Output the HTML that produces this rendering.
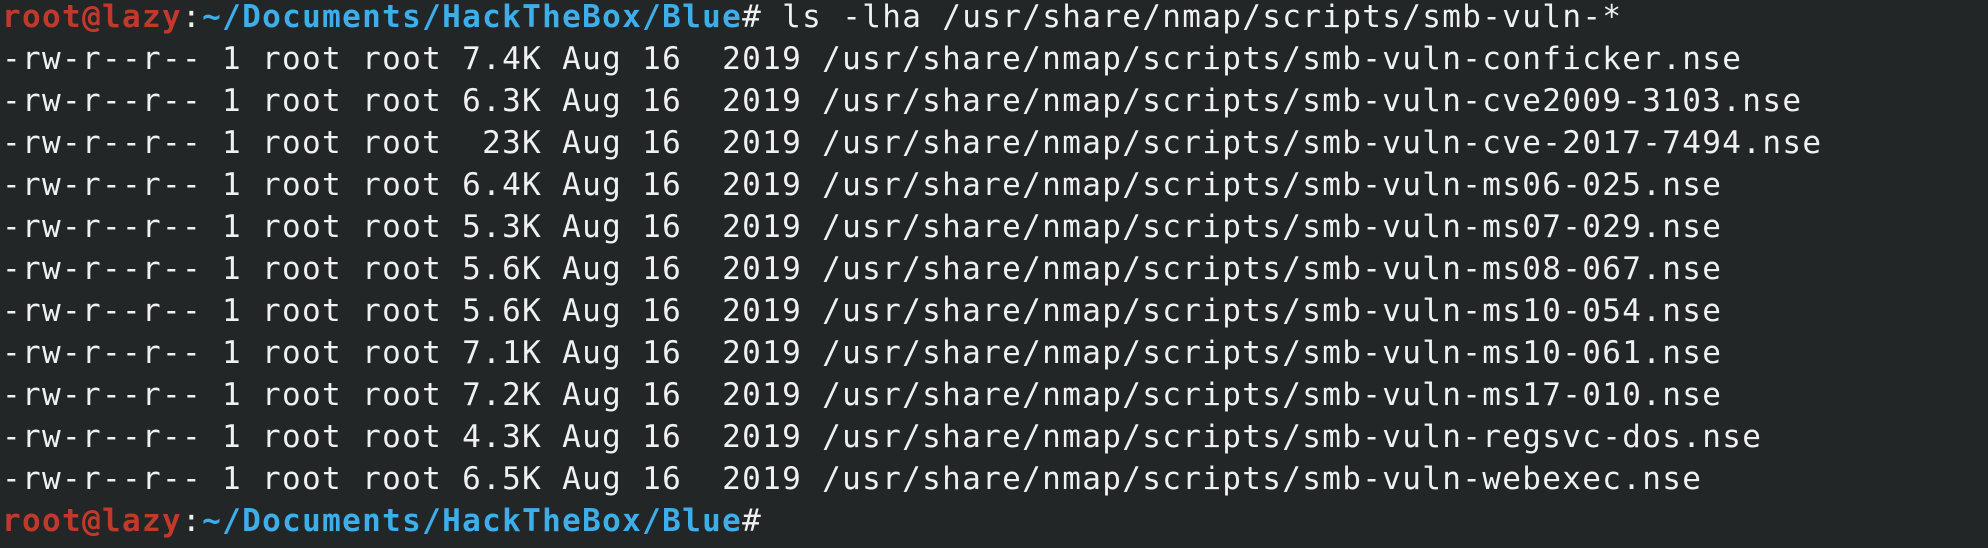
<!DOCTYPE html>
<html><head><meta charset="utf-8"><style>
html,body{margin:0;padding:0;background:#232627;width:1988px;height:548px;overflow:hidden}
pre{margin:0;padding:0 0 0 2px;position:relative;top:-4px;font-family:"DejaVu Sans Mono","Liberation Mono",monospace;font-size:31px;letter-spacing:1.34px;line-height:42px;color:#eff0f1}
.r{color:#c0392b;font-weight:bold}.b{color:#3daee9;font-weight:bold}
</style></head><body><pre><span class="r">root@lazy</span>:<span class="b">~/Documents/HackTheBox/Blue</span># ls -lha /usr/share/nmap/scripts/smb-vuln-*
-rw-r--r-- 1 root root 7.4K Aug 16  2019 /usr/share/nmap/scripts/smb-vuln-conficker.nse
-rw-r--r-- 1 root root 6.3K Aug 16  2019 /usr/share/nmap/scripts/smb-vuln-cve2009-3103.nse
-rw-r--r-- 1 root root  23K Aug 16  2019 /usr/share/nmap/scripts/smb-vuln-cve-2017-7494.nse
-rw-r--r-- 1 root root 6.4K Aug 16  2019 /usr/share/nmap/scripts/smb-vuln-ms06-025.nse
-rw-r--r-- 1 root root 5.3K Aug 16  2019 /usr/share/nmap/scripts/smb-vuln-ms07-029.nse
-rw-r--r-- 1 root root 5.6K Aug 16  2019 /usr/share/nmap/scripts/smb-vuln-ms08-067.nse
-rw-r--r-- 1 root root 5.6K Aug 16  2019 /usr/share/nmap/scripts/smb-vuln-ms10-054.nse
-rw-r--r-- 1 root root 7.1K Aug 16  2019 /usr/share/nmap/scripts/smb-vuln-ms10-061.nse
-rw-r--r-- 1 root root 7.2K Aug 16  2019 /usr/share/nmap/scripts/smb-vuln-ms17-010.nse
-rw-r--r-- 1 root root 4.3K Aug 16  2019 /usr/share/nmap/scripts/smb-vuln-regsvc-dos.nse
-rw-r--r-- 1 root root 6.5K Aug 16  2019 /usr/share/nmap/scripts/smb-vuln-webexec.nse
<span class="r">root@lazy</span>:<span class="b">~/Documents/HackTheBox/Blue</span>#</pre></body></html>
